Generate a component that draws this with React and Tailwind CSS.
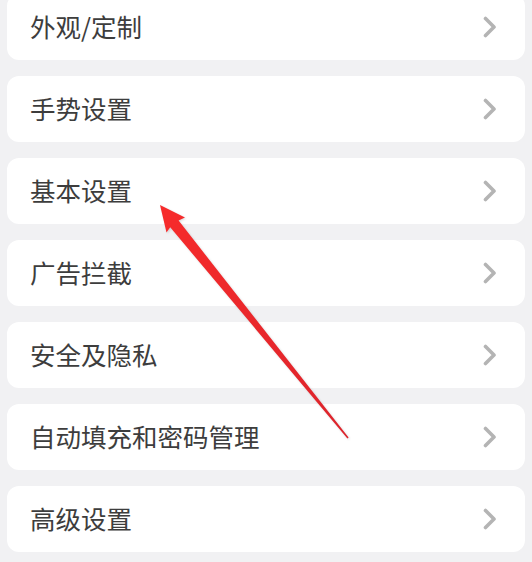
import React from "react";

const ITEMS = ["外观/定制", "手势设置", "基本设置", "广告拦截", "安全及隐私", "自动填充和密码管理", "高级设置"];

export default function App() {
  return (
    <div className="relative w-[532px] h-[562px] overflow-hidden bg-[#f1f1f3]" style={{ fontFamily: '"Noto Sans CJK SC", "Noto Sans", sans-serif' }}>
      <div className="flex flex-col gap-[16px] -mt-[6px] pl-[7px] pr-[7px]">
        {ITEMS.map((label) => (
          <Row key={label} label={label} />
        ))}
      </div>
      {/* annotation arrow */}
      <svg className="absolute inset-0 pointer-events-none" width="532" height="562" viewBox="0 0 532 562">
        <defs>
          <linearGradient id="arr" x1="160" y1="205" x2="348" y2="438" gradientUnits="userSpaceOnUse">
            <stop offset="0" stopColor="#f72b2b" />
            <stop offset="1" stopColor="#dc242c" />
          </linearGradient>
        </defs>
        <polygon
          points="160,205 185,217.5 178.6,220.6 348.6,437.6 347.4,438.4 170.2,227.3 166.5,232.5"
          fill="url(#arr)"
          style={{ filter: "drop-shadow(1px 1px 1px rgba(0,0,0,0.15))" }}
        />
      </svg>
    </div>
  );
}

function Row({ label }) {
  return (
    <div className="h-[66px] rounded-[12px] bg-white flex items-center justify-between pl-[23px] pr-[28px]">
      <span className="text-[25.5px] leading-none text-[#3d3d3d] -mt-[2px]">{label}</span>
      <svg width="14" height="22" viewBox="0 0 14 22" fill="none">
        <path d="M2.5 2.5 L11 11 L2.5 19.5" stroke="#b4b4b4" strokeWidth="3.6" strokeLinecap="round" strokeLinejoin="round" />
      </svg>
    </div>
  );
}
